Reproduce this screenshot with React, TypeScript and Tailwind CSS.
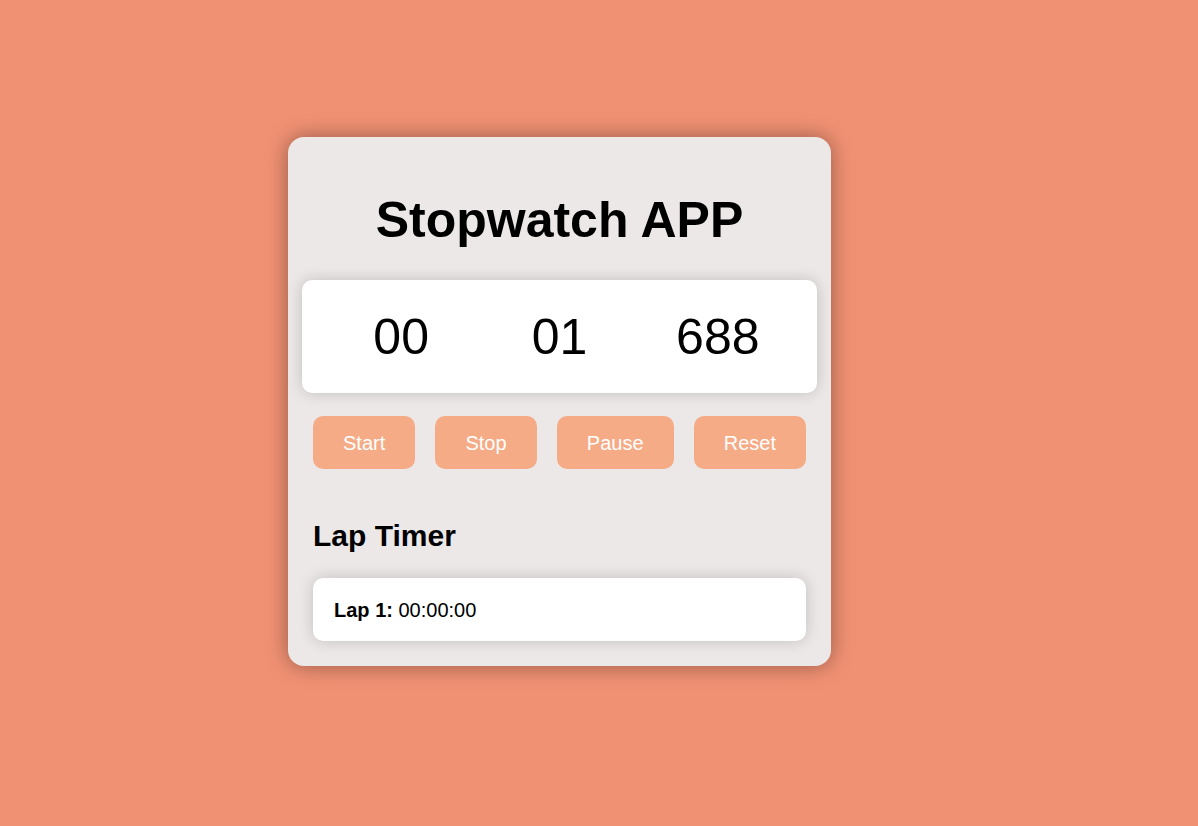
import React, { useState } from "react";

function App() {
  const [laps] = useState<string[]>(["00:00:00"]);
  const time = { min: "00", sec: "01", ms: "688" };
  const buttons = ["Start", "Stop", "Pause", "Reset"];

  return (
    <div className="min-h-[826px] w-full bg-[#f19174] pl-[288px] pt-[137px] font-['Liberation_Sans',Arial,sans-serif] text-black">
      <div className="w-[543px] rounded-[16px] bg-[#ece8e7] p-[25px] shadow-[0_0_22px_rgba(0,0,0,0.38)]">
        <h1 className="mt-[30px] h-[57px] text-center text-[50px] font-bold leading-[57px]">
          Stopwatch APP
        </h1>

        <div className="-mx-[11px] mt-[31px] grid h-[113px] grid-cols-3 items-center rounded-[10px] bg-white px-[20px] text-center text-[50px] leading-none shadow-[0_0_15px_rgba(0,0,0,0.18)]">
          <span>{time.min}</span>
          <span>{time.sec}</span>
          <span>{time.ms}</span>
        </div>

        <div className="mt-[23px] flex justify-between">
          {buttons.map((label) => (
            <button
              key={label}
              className="h-[53px] rounded-[10px] bg-[#f5ab86] px-[30px] text-[20px] text-white"
            >
              {label}
            </button>
          ))}
        </div>

        <h2 className="mt-[49px] h-[35px] text-[30px] font-bold leading-[35px]">
          Lap Timer
        </h2>

        <ul className="mt-[25px]">
          {laps.map((lap, idx) => (
            <li
              key={idx}
              className="flex h-[63px] items-center rounded-[10px] bg-white px-[21px] text-[20px] shadow-[0_0_15px_rgba(0,0,0,0.18)]"
            >
              <span>
                <strong>Lap {idx + 1}:</strong> {lap}
              </span>
            </li>
          ))}
        </ul>
      </div>
    </div>
  );
}

export default App;
